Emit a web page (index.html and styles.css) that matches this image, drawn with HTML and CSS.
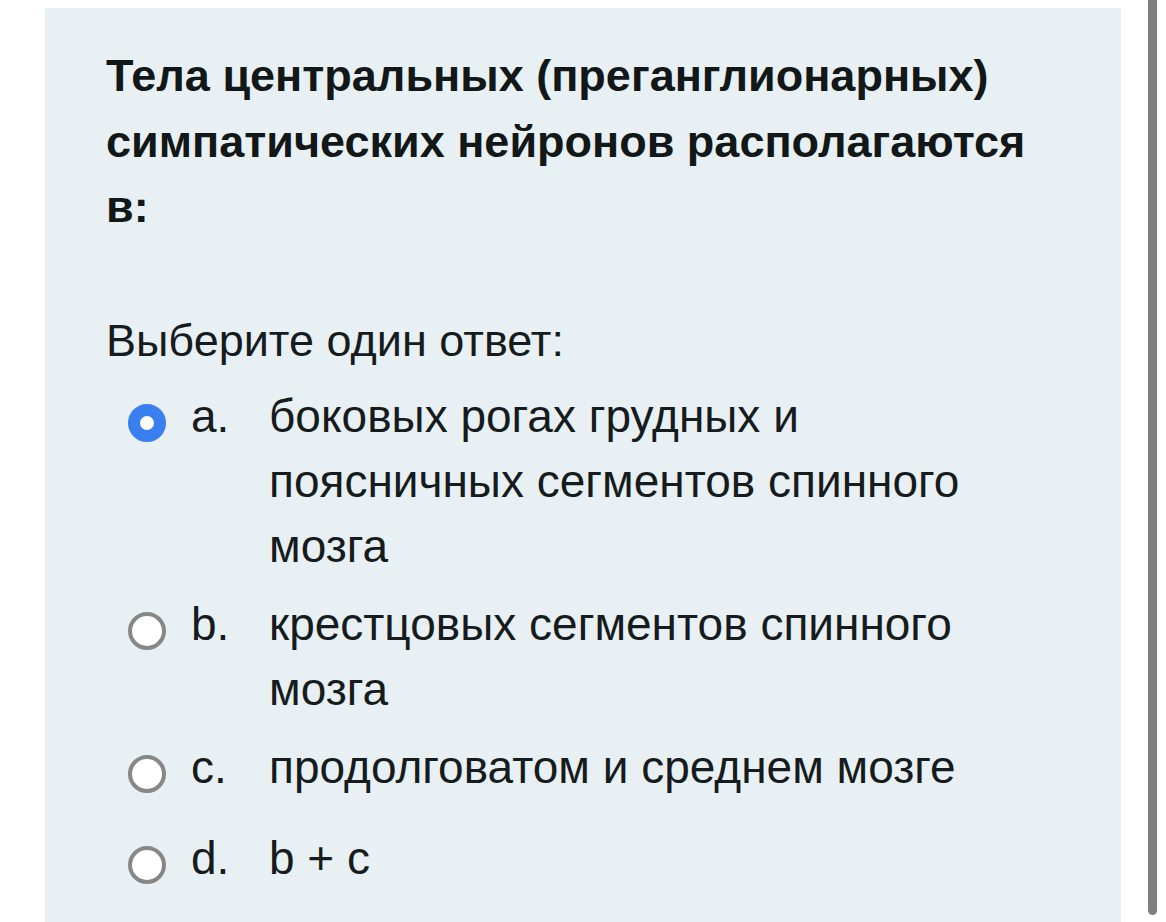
FILE: index.html
```html
<!DOCTYPE html>
<html lang="ru">
<head>
<meta charset="utf-8">
<title>Вопрос</title>
<link rel="stylesheet" href="styles.css">
</head>
<body>
<div class="page">
  <section class="question">
    <h1 class="qtext">Тела центральных (преганглионарных) симпатических нейронов располагаются в:</h1>
    <p class="prompt">Выберите один ответ:</p>
    <div class="answers">
      <div class="option">
        <span class="radio checked"></span>
        <span class="letter">a.</span>
        <span class="label">боковых рогах грудных и<br>поясничных сегментов спинного<br>мозга</span>
      </div>
      <div class="option">
        <span class="radio"></span>
        <span class="letter">b.</span>
        <span class="label">крестцовых сегментов спинного<br>мозга</span>
      </div>
      <div class="option">
        <span class="radio"></span>
        <span class="letter">c.</span>
        <span class="label">продолговатом и среднем мозге</span>
      </div>
      <div class="option last">
        <span class="radio"></span>
        <span class="letter">d.</span>
        <span class="label">b + c</span>
      </div>
    </div>
  </section>
</div>
<div class="scrollbar"></div>
</body>
</html>
```

FILE: styles.css
```css
html, body {
  margin: 0;
  padding: 0;
  background: #ffffff;
  height: 100%;
  overflow: hidden;
}

body {
  font-family: "Liberation Sans", Arial, sans-serif;
  color: #161c1d;
}

.page {
  padding: 8px 0 0 45px;
  height: 914px;
  box-sizing: content-box;
}

.question {
  width: 1076px;
  height: 914px;
  box-sizing: border-box;
  background: #e8f0f3;
  padding: 35px 61px 0 61px;
}

.qtext {
  margin: 0;
  font-size: 45px;
  line-height: 65.5px;
  font-weight: 700;
  color: #121718;
}

.prompt {
  margin: 68px 0 0 0;
  font-size: 45px;
  line-height: 65.5px;
}

.answers {
  margin-top: 11px;
  display: flex;
  flex-direction: column;
  gap: 13px;
}

.option {
  display: flex;
  align-items: flex-start;
  padding-left: 22px;
  font-size: 46px;
  line-height: 65px;
}

.option.last {
  margin-top: 13px;
}

.radio {
  flex: none;
  width: 38px;
  height: 38px;
  margin-top: 20px;
  box-sizing: border-box;
  border-radius: 50%;
  border: 4px solid #878787;
  background: #ffffff;
}

.radio.checked {
  border: 12px solid #3a7ff0;
}

.letter {
  flex: none;
  width: 78px;
  margin-left: 25px;
}

.label {
  flex: 1;
}

.scrollbar {
  position: absolute;
  top: 0;
  left: 1148px;
  width: 9px;
  height: 915px;
  background: #7f7f7f;
  border-radius: 0 0 5px 5px;
}
```
